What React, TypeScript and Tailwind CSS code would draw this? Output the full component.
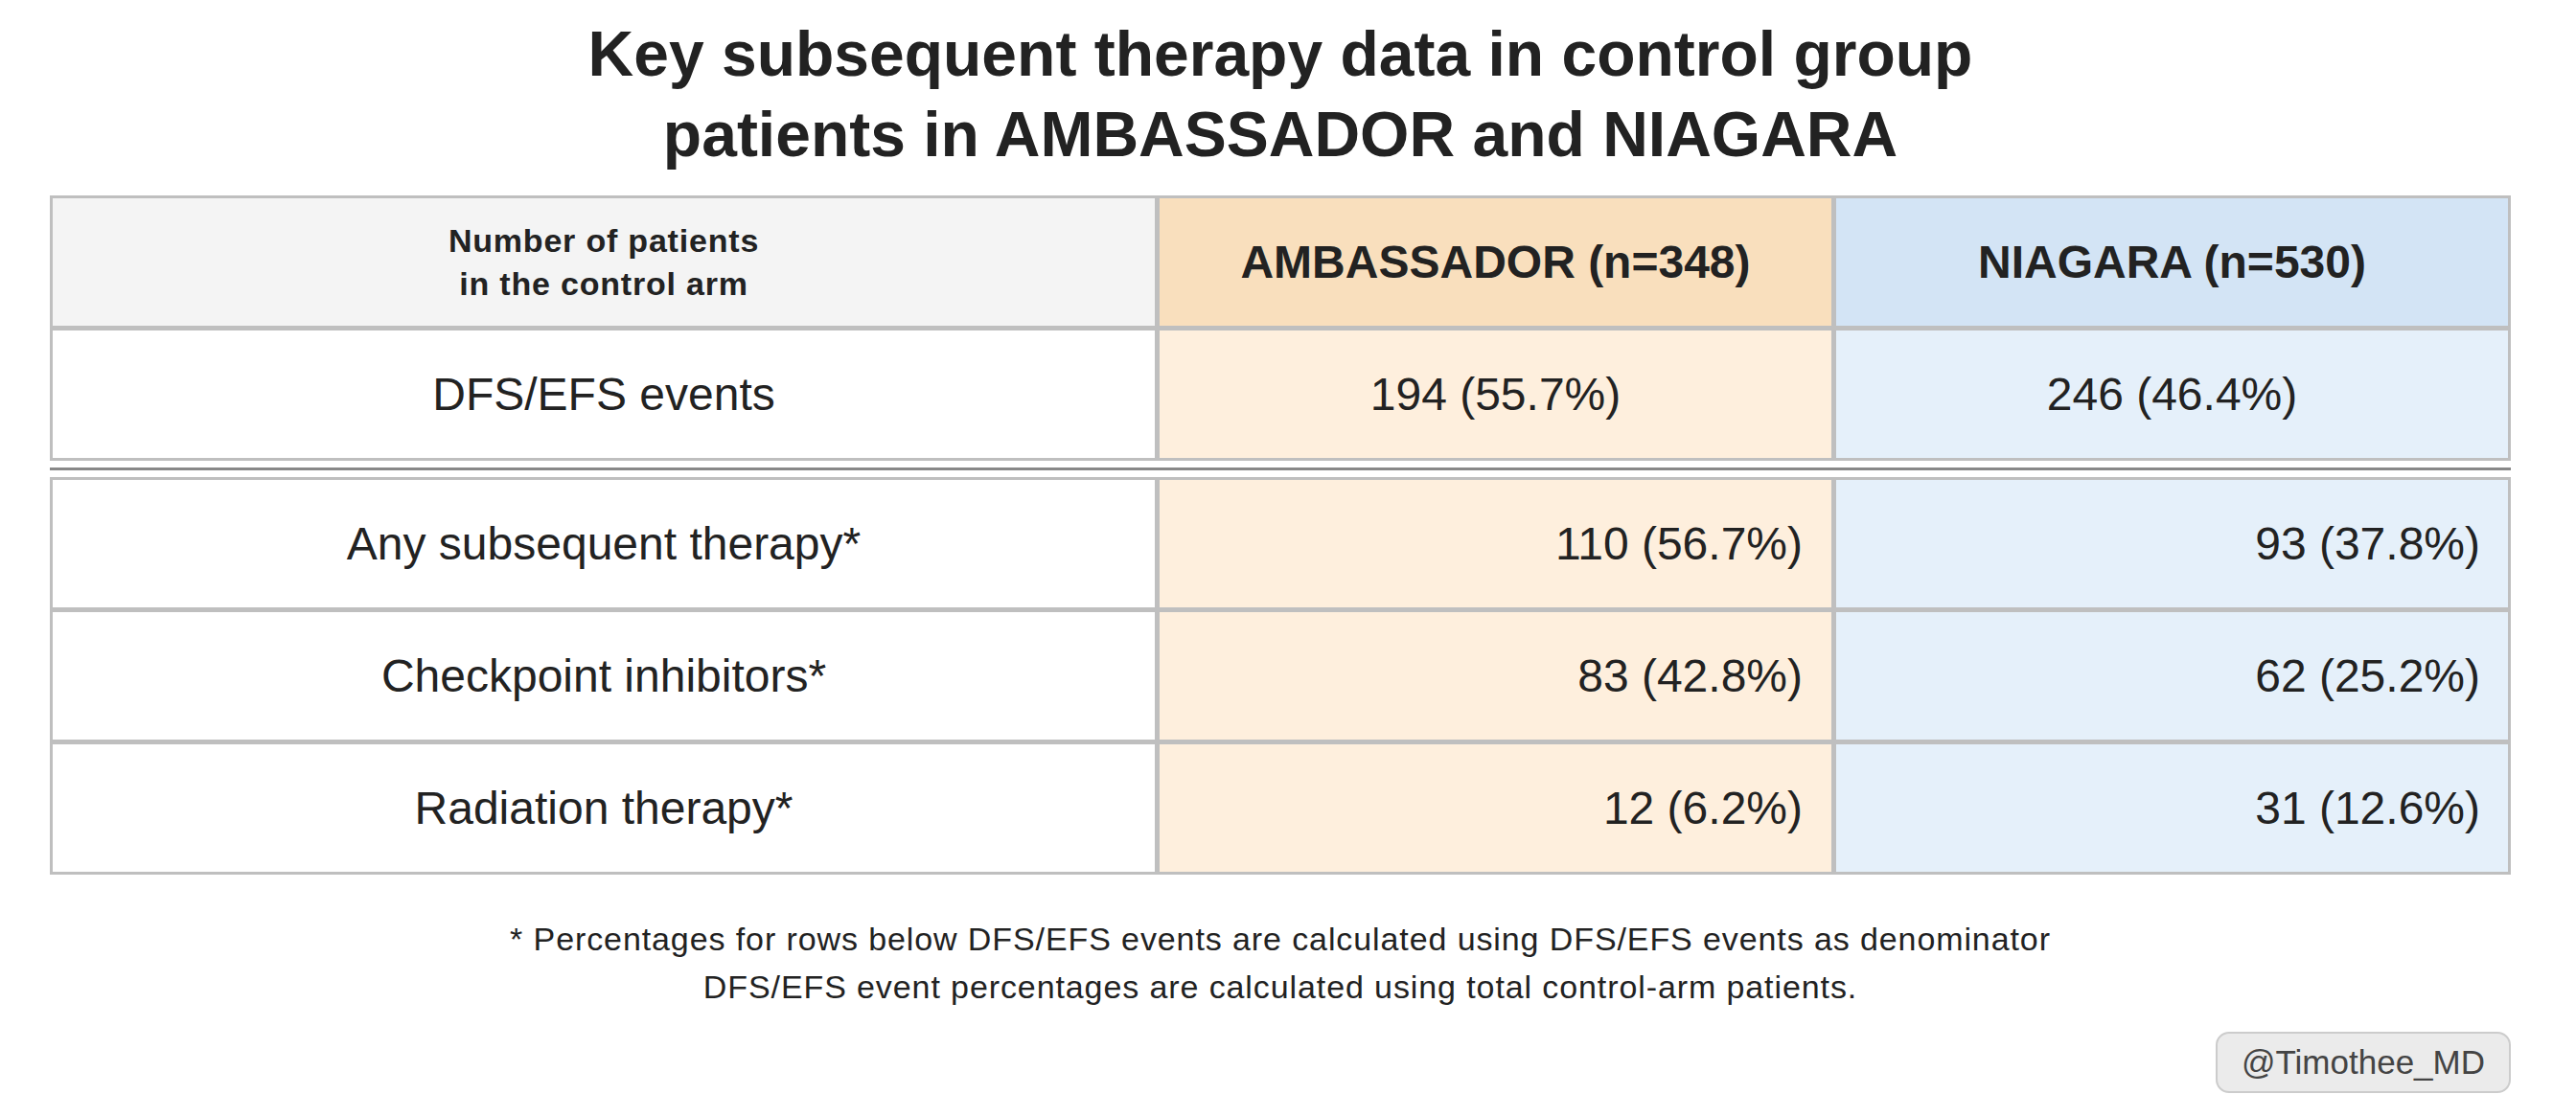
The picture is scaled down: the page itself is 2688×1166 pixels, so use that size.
const FONT = 'font-["Liberation_Sans",Arial,Helvetica,sans-serif]';

const EVENTS = { label: 'DFS/EFS events', a: '194 (55.7%)', n: '246 (46.4%)' };

const THERAPIES = [
  { label: 'Any subsequent therapy*', a: '110 (56.7%)', n: '93 (37.8%)' },
  { label: 'Checkpoint inhibitors*', a: '83 (42.8%)', n: '62 (25.2%)' },
  { label: 'Radiation therapy*', a: '12 (6.2%)', n: '31 (12.6%)' },
];

export default function App() {
  return (
    <div className={`${FONT} min-h-[1166px] w-[2688px] bg-white text-[#222]`}>
      <div className="ml-[52px] w-[2568px] pt-[14px]">
        {/* Title */}
        <h1 className="text-center text-[66px] font-bold leading-[84px]">
          Key subsequent therapy data in control group
          <br />
          patients in AMBASSADOR and NIAGARA
        </h1>

        {/* Top table: header + events */}
        <div className="mt-[22px] grid grid-cols-[1150px_701px_701px] gap-[5px] bg-[#bfbfbf] p-[3px]">
          <div className="flex h-[133px] items-center justify-center bg-[#f4f4f4] text-center text-[34px] font-bold leading-[45px] tracking-[0.8px]">
            <span>
              Number of patients
              <br />
              in the control arm
            </span>
          </div>
          <div className="flex h-[133px] items-center justify-center bg-[#f9dfbd] text-[48px] font-bold">
            AMBASSADOR (n=348)
          </div>
          <div className="flex h-[133px] items-center justify-center bg-[#d3e4f5] text-[48px] font-bold">
            NIAGARA (n=530)
          </div>

          <div className="flex h-[133px] items-center justify-center bg-white text-[48px]">
            {EVENTS.label}
          </div>
          <div className="flex h-[133px] items-center justify-center bg-[#feefdd] text-[48px]">
            {EVENTS.a}
          </div>
          <div className="flex h-[133px] items-center justify-center bg-[#e5f0fa] text-[48px]">
            {EVENTS.n}
          </div>
        </div>

        {/* Separator */}
        <div className="py-[7px]">
          <div className="h-[3px] bg-[#888]" />
        </div>

        {/* Bottom table: subsequent therapies */}
        <div className="grid grid-cols-[1150px_701px_701px] gap-[5px] bg-[#bfbfbf] p-[3px]">
          {THERAPIES.map((row) => (
            <div key={row.label} className="contents">
              <div className="flex h-[133px] items-center justify-center bg-white text-[48px]">
                {row.label}
              </div>
              <div className="flex h-[133px] items-center justify-end bg-[#feefdd] pr-[30px] text-[48px]">
                {row.a}
              </div>
              <div className="flex h-[133px] items-center justify-end bg-[#e5f0fa] pr-[29px] text-[48px]">
                {row.n}
              </div>
            </div>
          ))}
        </div>

        {/* Footnote */}
        <p className="mt-[42px] text-center text-[34px] leading-[50px] tracking-[0.9px]">
          * Percentages for rows below DFS/EFS events are calculated using DFS/EFS events as denominator
          <br />
          DFS/EFS event percentages are calculated using total control-arm patients.
        </p>

        {/* Watermark */}
        <div className="mt-[22px] flex justify-end">
          <div className="flex h-[64px] items-center rounded-[14px] border-2 border-[#cccccc] bg-[#ebebeb] px-[25px] text-[35px] text-[#444]">
            @Timothee_MD
          </div>
        </div>
      </div>
    </div>
  );
}
